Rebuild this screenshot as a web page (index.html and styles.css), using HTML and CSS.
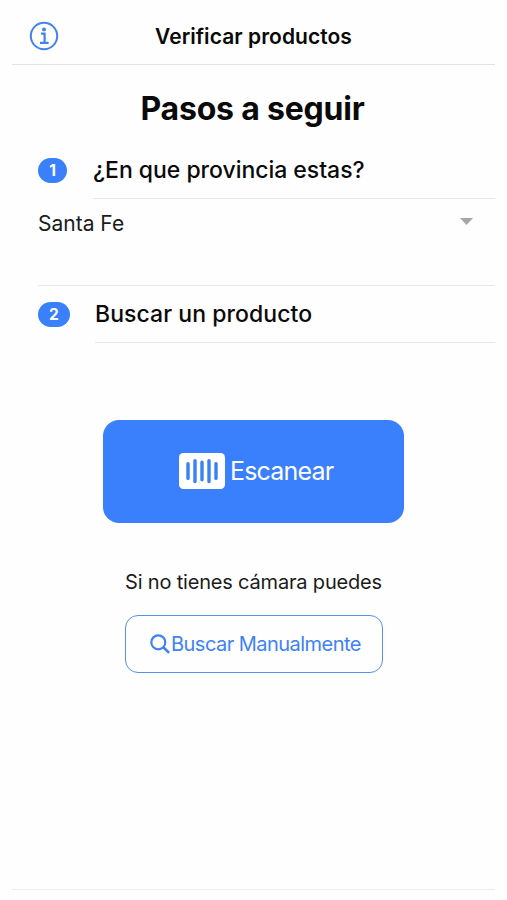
FILE: index.html
```html
<!DOCTYPE html>
<html lang="es">
<head>
<meta charset="utf-8">
<title>Verificar productos</title>
<link rel="stylesheet" href="styles.css">
</head>
<body>
<div class="screen">
  <header class="toolbar">
    <svg class="info" viewBox="0 0 30 30" fill="none" stroke="#4583ea" stroke-width="2">
      <circle cx="15" cy="15" r="13.2"/>
      <path d="M12 12.7h3.6v9M11 21.9h8.6" stroke-width="2.2"/>
      <circle cx="15" cy="8.6" r="2" fill="#4583ea" stroke="none"/>
    </svg>
    <h1 class="title"><span>Verificar productos</span></h1>
  </header>
  <main class="content">
    <h2 class="heading"><span>Pasos a seguir</span></h2>
    <section class="step">
      <span class="badge">1</span>
      <div class="label label-one"><span>¿En que provincia estas?</span></div>
    </section>
    <div class="select">
      <span class="value">Santa Fe</span>
      <svg class="arrow" viewBox="0 0 13 7"><path d="M0 0h13L6.5 7z" fill="#a6a6a6"/></svg>
    </div>
    <section class="step step-two">
      <span class="badge badge-two">2</span>
      <div class="label label-two"><span>Buscar un producto</span></div>
    </section>
    <button class="scan">
      <svg class="barcode" viewBox="0 0 46 36">
        <rect width="46" height="36" rx="4.5" fill="#fff"/>
        <path d="M9 10.6v14.8M16 7.6v21M23 9.2v17.6M30 7.6v21M37 10.6v14.8" stroke="#3a80f6" stroke-width="3.4" stroke-linecap="round"/>
      </svg>
      <span class="scan-text">Escanear</span>
    </button>
    <p class="hint"><span>Si no tienes cámara puedes</span></p>
    <button class="manual">
      <svg class="search" viewBox="0 0 20 20" fill="none" stroke="#3f82f5" stroke-width="2.2">
        <circle cx="8.3" cy="8.3" r="7"/><path d="M13.3 13.3l5.8 5.6" stroke-width="2.6"/>
      </svg>
      <span class="manual-text">Buscar Manualmente</span>
    </button>
  </main>
  <footer class="footer"></footer>
</div>
</body>
</html>
```
FILE: styles.css
```css
* { box-sizing: border-box; }
body { margin: 0; background: #fefefe; color: #0a0a0a; font-family: Inter, "Liberation Sans", sans-serif; }
h1, h2, p { margin: 0; }
button { font-family: inherit; padding: 0; cursor: pointer; }
span { white-space: nowrap; }
.screen { width: 507px; height: 900px; padding: 0 12px; display: flex; flex-direction: column; overflow: hidden; }
.toolbar { height: 65px; flex: none; border-bottom: 1px solid #e3e3e3; display: grid; grid-template-columns: 60px 1fr 60px; align-items: center; padding-top: 8px; }
.info { width: 30px; height: 30px; margin-left: 17px; }
.title { font-size: 21px; font-weight: 600; line-height: 30px; padding-top: 2px; text-align: center; letter-spacing: 0.05px; }
.content { flex: 1; display: flex; flex-direction: column; align-items: center; }
.heading { margin: 24px 2px 0 0; height: 39px; line-height: 40px; font-size: 32px; font-weight: 700; letter-spacing: -0.2px; }
.step { align-self: stretch; height: 71px; padding-left: 26px; display: flex; align-items: flex-start; }
.badge { width: 29px; height: 25px; margin-top: 30px; border-radius: 13px; background: #3a80fc; color: #fff; font-size: 15.5px; font-weight: 700; line-height: 25px; text-align: center; }
.label { flex: 1; margin-left: 26px; height: 71px; padding-top: 26px; border-bottom: 1px solid #e8e8e8; font-size: 23px; font-weight: 500; line-height: 32px; letter-spacing: -0.03px; }
.select { align-self: stretch; height: 87px; margin-left: 26px; padding: 10px 22px 0 0; border-bottom: 1px solid #e8e8e8; display: flex; justify-content: space-between; align-items: flex-start; }
.value { font-size: 21px; line-height: 30px; color: #1b1b1b; }
.arrow { width: 13px; height: 7px; margin-top: 9px; }
.step-two, .step-two .label { height: 57px; }
.step-two .label { padding-top: 12px; margin-left: 25px; letter-spacing: 0.06px; }
.badge-two { width: 32px; margin-top: 16px; }
.scan { width: 301px; height: 103px; margin: 77px 0 0; border: 0; border-radius: 16px; background: #3a80fd; color: #fff; display: flex; align-items: center; padding-left: 76px; }
.barcode { width: 46px; height: 36px; margin-top: -1px; }
.scan-text { margin: -2px 0 0 5px; font-size: 25px; font-weight: 400; line-height: 30px; letter-spacing: -0.8px; }
.hint { margin-top: 44px; font-size: 20px; line-height: 30px; color: #1b1b1b; letter-spacing: -0.18px; }
.manual { width: 258px; height: 58px; margin: 18px 0 0 1px; border: 1.5px solid #5790ed; border-radius: 13px; background: transparent; color: #3f82f5; display: flex; align-items: center; padding-left: 24px; }
.search { width: 20px; height: 20px; }
.manual-text { margin-left: 1px; font-size: 20px; font-weight: 400; line-height: 30px; letter-spacing: -0.53px; }
.footer { height: 11px; flex: none; border-top: 1px solid #ececec; }
```
